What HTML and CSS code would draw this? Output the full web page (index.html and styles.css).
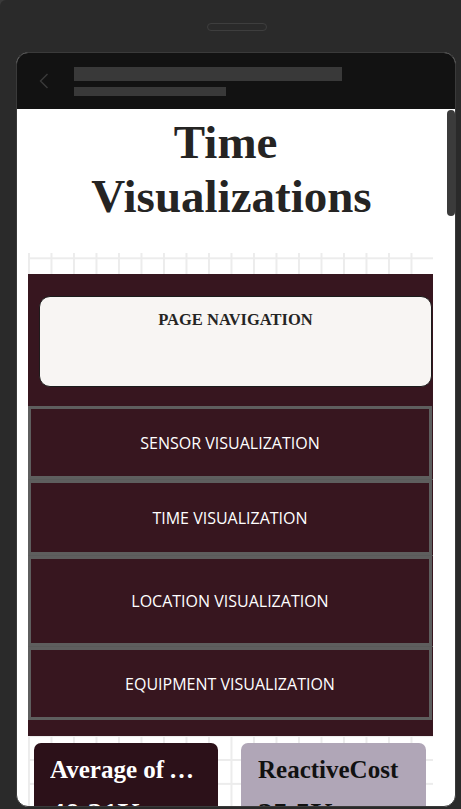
FILE: index.html
```html
<!DOCTYPE html>
<html lang="en">
<head>
<meta charset="utf-8">
<title>Time Visualizations</title>
<link rel="stylesheet" href="styles.css">
</head>
<body>
<div class="device">
  <div class="speaker"></div>
  <div class="screen">
    <div class="appbar">
      <svg class="back" width="10" height="16" viewBox="0 0 10 16"><polyline points="8.5,1 1.5,8 8.5,15" fill="none" stroke="#3a3a3a" stroke-width="1.4"/></svg>
      <div class="titles">
        <div class="bar bar1"></div>
        <div class="bar bar2"></div>
      </div>
    </div>
    <div class="viewport">
      <main class="page">
        <h1 class="title">Time&nbsp;<br>Visualizations</h1>
        <div class="canvas">
          <section class="panel">
            <div class="nav-wrap">
              <div class="nav-box"><h2 class="nav-title">PAGE NAVIGATION</h2></div>
            </div>
            <div class="btn btn-1">SENSOR VISUALIZATION</div>
            <div class="sep"></div>
            <div class="btn btn-2">TIME VISUALIZATION</div>
            <div class="sep"></div>
            <div class="btn btn-3">LOCATION VISUALIZATION</div>
            <div class="sep"></div>
            <div class="btn btn-4">EQUIPMENT VISUALIZATION</div>
          </section>
          <div class="cards">
            <div class="card card-dark">
              <div class="card-title">Average of ActiveCost</div>
              <div class="card-value">40.21K</div>
            </div>
            <div class="card card-light">
              <div class="card-title">ReactiveCost</div>
              <div class="card-value">35.5K</div>
            </div>
          </div>
        </div>
      </main>
      <div class="track"><div class="thumb"></div></div>
    </div>
  </div>
</div>
</body>
</html>
```
FILE: styles.css
```css
* { box-sizing: border-box; }
html, body { margin: 0; height: 100%; }
body { background: #3a3a3a; overflow: hidden; }

.device {
  height: 809px;
  background: #2a2a2a;
  padding: 23px 5px 0 16px;
  display: flex;
  flex-direction: column;
  border-top-left-radius: 6px;
}
.speaker {
  align-self: center;
  width: 60px;
  height: 8px;
  border: 1px solid #3e3e3e;
  border-radius: 4px;
  margin: 0 0 21px 2px;
}
.screen {
  height: 755px;
  border: 1px solid #3a3a3a;
  border-radius: 12px;
  overflow: hidden;
  display: flex;
  flex-direction: column;
  background: #fff;
}
.appbar {
  height: 56px;
  flex: none;
  background: #121212;
  display: flex;
  align-items: center;
  padding-left: 22px;
}
.back { display: block; margin-top: -1px; }
.titles { margin-left: 25px; display: flex; flex-direction: column; gap: 6px; padding-top: 1px; }
.bar { background: #393939; }
.bar1 { width: 268px; height: 14px; }
.bar2 { width: 152px; height: 9px; }

.viewport { flex: 1; display: flex; min-height: 0; }
.page { flex: 1; min-width: 0; }
.track { width: 9px; flex: none; padding-top: 1px; display: flex; justify-content: flex-end; }
.thumb { width: 8px; height: 106px; border-radius: 4px; background: #3b3b3b; }

.title {
  margin: 0;
  padding-top: 6px;
  font-family: "Liberation Serif", "Times New Roman", serif;
  font-weight: bold;
  font-size: 47px;
  line-height: 54px;
  text-align: center;
  color: #252423;
}

.canvas {
  margin: 30px 13px 0 11px;
  height: 600px;
  padding-top: 21px;
  background-color: #fff;
  background-image:
    linear-gradient(to right, #ececec 2px, transparent 2px),
    linear-gradient(to bottom, #ececec 2px, transparent 2px);
  background-size: 22.5px 23.9px;
  background-position: 0 4.3px;
}

.panel { background: #37161f; padding-bottom: 16px; }
.nav-wrap { padding: 22px 1px 19px 11px; }
.nav-box {
  height: 91px;
  background: #f8f5f3;
  border: 1px solid #1c1c1c;
  border-radius: 11px;
  padding-top: 13px;
  text-align: center;
}
.nav-title {
  margin: 0;
  font-family: "Liberation Serif", "Times New Roman", serif;
  font-weight: bold;
  font-size: 16.5px;
  color: #252423;
}

.btn {
  margin-right: 1px;
  border: 3px solid #5e5e5e;
  display: flex;
  align-items: center;
  justify-content: center;
  color: #fff;
  font-family: "Open Sans", "Liberation Sans", sans-serif;
  font-size: 16px;
}
.btn-1 { height: 73px; }
.btn-2 { height: 75px; }
.btn-3 { height: 90px; }
.btn-4 { height: 73px; }
.sep { height: 1px; background: #5a5a5a; }

.cards { display: flex; gap: 23px; padding: 7px 7px 0 6px; }
.card {
  flex: 1;
  min-width: 0;
  height: 130px;
  border-radius: 7px;
  padding: 13px 20px 0 16px;
  font-family: "Liberation Serif", "Times New Roman", serif;
  font-weight: bold;
}
.card-dark { background: #2c1119; color: #fff; }
.card-light { background: #b0a6b7; color: #111; padding-left: 17px; }
.card-title {
  font-size: 25px;
  white-space: nowrap;
  overflow: hidden;
  text-overflow: ellipsis;
}
.card-value { font-size: 30px; margin-top: 12px; }
```
